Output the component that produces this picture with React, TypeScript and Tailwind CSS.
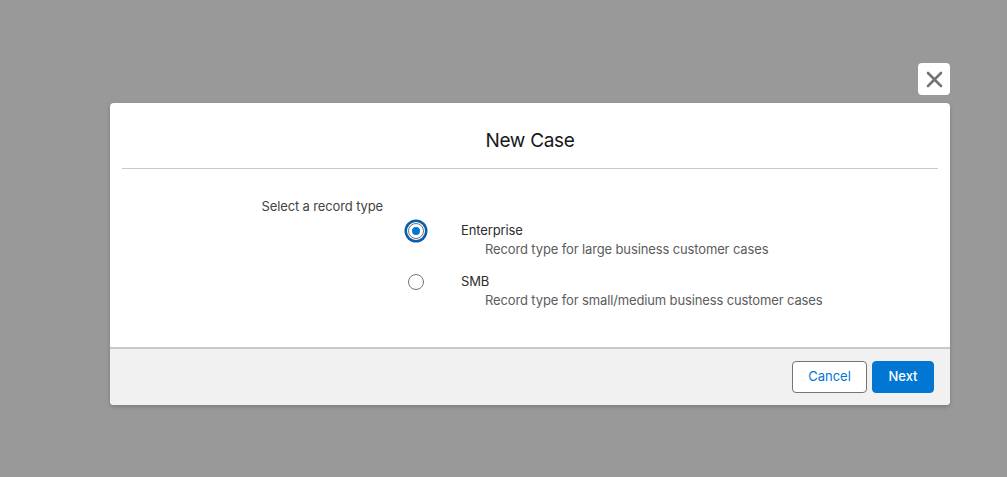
import { useState } from "react";

const RECORD_TYPES = [
  { id: "enterprise", label: "Enterprise", desc: "Record type for large business customer cases" },
  { id: "smb",        label: "SMB",        desc: "Record type for small/medium business customer cases" },
];

function Radio({ checked }: { checked: boolean }) {
  return (
    <span className="flex h-[22px] w-[22px] items-center justify-center">
      <span
        className={
          checked
            ? "flex h-4 w-4 items-center justify-center rounded-full border border-[#747474] bg-white shadow-[0_0_0_1px_#fff,0_0_0_3.5px_#0b5cab]"
            : "flex h-4 w-4 items-center justify-center rounded-full border border-[#747474] bg-white"
        }
      >
        {checked && <span className="h-[8px] w-[8px] rounded-full bg-[#0176d3]" />}
      </span>
    </span>
  );
}

export default function App() {
  const [selected, setSelected] = useState("enterprise");

  return (
    <div
      className="h-[477px] w-full overflow-hidden bg-[#999999] pl-[110px] pt-[63px]"
      style={{ fontFamily: "Inter, 'Liberation Sans', sans-serif" }}
    >
      <div className="flex w-[840px] flex-col">
        {/* close */}
        <div className="flex justify-end">
          <button className="flex h-8 w-8 items-center justify-center rounded bg-white">
            <svg width="17" height="17" viewBox="0 0 17 17" fill="none" stroke="#747474" strokeWidth="2.6" strokeLinecap="round">
              <path d="M2 2l13 13M15 2L2 15" />
            </svg>
          </button>
        </div>

        {/* modal */}
        <div className="mt-2 flex flex-col rounded bg-white shadow-[0_2px_4px_rgba(0,0,0,0.18)]">
          <div className="flex h-[65px] items-center justify-center pt-[10px]">
            <h2 className="text-[19px] leading-none tracking-[-0.3px] text-[#181818]">New Case</h2>
          </div>
          <div className="mx-3 h-px bg-[#c9c9c9]" />

          <div className="flex h-[178px] pt-[28px] text-[13px] leading-[18px] tracking-[-0.13px]">
            <div className="w-[273px] text-right text-[#444444]">
              Select a record type
            </div>
            <div className="ml-[22px] mt-[23px] flex flex-col gap-[13px]">
              {RECORD_TYPES.map((rt) => (
                <label key={rt.id} className="flex cursor-pointer items-start" onClick={() => setSelected(rt.id)}>
                  <Radio checked={selected === rt.id} />
                  <div className="ml-[34px] flex flex-col">
                    <span className="pt-[1px] text-[#2e2e2e]">{rt.label}</span>
                    <span className="ml-6 mt-[1px] text-[#5c5c5c]">{rt.desc}</span>
                  </div>
                </label>
              ))}
            </div>
          </div>

          <div className="flex h-[58px] items-center justify-end gap-[5px] rounded-b border-t-2 border-[#c9c9c9] bg-[#f1f1f1] px-4">
            <button className="h-8 w-[75px] rounded border border-[#747474] bg-white text-[13px] text-[#0176d3]">
              Cancel
            </button>
            <button className="h-8 w-[62px] rounded border border-[#0176d3] bg-[#0176d3] text-[13px] font-medium text-white">
              Next
            </button>
          </div>
        </div>
      </div>
    </div>
  );
}
